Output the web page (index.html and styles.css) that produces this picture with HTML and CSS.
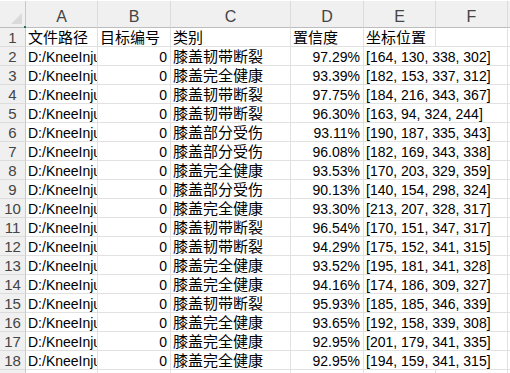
FILE: index.html
```html
<!DOCTYPE html>
<html>
<head>
<meta charset="utf-8">
<link rel="stylesheet" href="styles.css">
</head>
<body>
<div class="sheet">
  <div class="row head">
    <div class="corner"><span class="tri"></span></div>
    <div class="ch">A</div><div class="ch">B</div><div class="ch">C</div><div class="ch">D</div><div class="ch">E</div><div class="ch">F</div><div class="ch last"></div>
  </div>
  <div class="row">
    <div class="rn">1</div><div class="c zh">文件路径</div><div class="c zh">目标编号</div><div class="c zh">类别</div><div class="c zh">置信度</div><div class="c zh">坐标位置</div><div class="c"></div><div class="c last"></div>
  </div>
  <div class="row"><div class="rn">2</div><div class="c">D:/KneeInjury</div><div class="c num">0</div><div class="c zh">膝盖韧带断裂</div><div class="c num">97.29%</div><div class="c spill">[164, 130, 338, 302]</div><div class="c"></div><div class="c last"></div></div>
  <div class="row"><div class="rn">3</div><div class="c">D:/KneeInjury</div><div class="c num">0</div><div class="c zh">膝盖完全健康</div><div class="c num">93.39%</div><div class="c spill">[182, 153, 337, 312]</div><div class="c"></div><div class="c last"></div></div>
  <div class="row"><div class="rn">4</div><div class="c">D:/KneeInjury</div><div class="c num">0</div><div class="c zh">膝盖韧带断裂</div><div class="c num">97.75%</div><div class="c spill">[184, 216, 343, 367]</div><div class="c"></div><div class="c last"></div></div>
  <div class="row"><div class="rn">5</div><div class="c">D:/KneeInjury</div><div class="c num">0</div><div class="c zh">膝盖韧带断裂</div><div class="c num">96.30%</div><div class="c spill">[163, 94, 324, 244]</div><div class="c"></div><div class="c last"></div></div>
  <div class="row"><div class="rn">6</div><div class="c">D:/KneeInjury</div><div class="c num">0</div><div class="c zh">膝盖部分受伤</div><div class="c num">93.11%</div><div class="c spill">[190, 187, 335, 343]</div><div class="c"></div><div class="c last"></div></div>
  <div class="row"><div class="rn">7</div><div class="c">D:/KneeInjury</div><div class="c num">0</div><div class="c zh">膝盖部分受伤</div><div class="c num">96.08%</div><div class="c spill">[182, 169, 343, 338]</div><div class="c"></div><div class="c last"></div></div>
  <div class="row"><div class="rn">8</div><div class="c">D:/KneeInjury</div><div class="c num">0</div><div class="c zh">膝盖完全健康</div><div class="c num">93.53%</div><div class="c spill">[170, 203, 329, 359]</div><div class="c"></div><div class="c last"></div></div>
  <div class="row"><div class="rn">9</div><div class="c">D:/KneeInjury</div><div class="c num">0</div><div class="c zh">膝盖部分受伤</div><div class="c num">90.13%</div><div class="c spill">[140, 154, 298, 324]</div><div class="c"></div><div class="c last"></div></div>
  <div class="row"><div class="rn">10</div><div class="c">D:/KneeInjury</div><div class="c num">0</div><div class="c zh">膝盖完全健康</div><div class="c num">93.30%</div><div class="c spill">[213, 207, 328, 317]</div><div class="c"></div><div class="c last"></div></div>
  <div class="row"><div class="rn">11</div><div class="c">D:/KneeInjury</div><div class="c num">0</div><div class="c zh">膝盖韧带断裂</div><div class="c num">96.54%</div><div class="c spill">[170, 151, 347, 317]</div><div class="c"></div><div class="c last"></div></div>
  <div class="row"><div class="rn">12</div><div class="c">D:/KneeInjury</div><div class="c num">0</div><div class="c zh">膝盖韧带断裂</div><div class="c num">94.29%</div><div class="c spill">[175, 152, 341, 315]</div><div class="c"></div><div class="c last"></div></div>
  <div class="row"><div class="rn">13</div><div class="c">D:/KneeInjury</div><div class="c num">0</div><div class="c zh">膝盖完全健康</div><div class="c num">93.52%</div><div class="c spill">[195, 181, 341, 328]</div><div class="c"></div><div class="c last"></div></div>
  <div class="row"><div class="rn">14</div><div class="c">D:/KneeInjury</div><div class="c num">0</div><div class="c zh">膝盖完全健康</div><div class="c num">94.16%</div><div class="c spill">[174, 186, 309, 327]</div><div class="c"></div><div class="c last"></div></div>
  <div class="row"><div class="rn">15</div><div class="c">D:/KneeInjury</div><div class="c num">0</div><div class="c zh">膝盖韧带断裂</div><div class="c num">95.93%</div><div class="c spill">[185, 185, 346, 339]</div><div class="c"></div><div class="c last"></div></div>
  <div class="row"><div class="rn">16</div><div class="c">D:/KneeInjury</div><div class="c num">0</div><div class="c zh">膝盖完全健康</div><div class="c num">93.65%</div><div class="c spill">[192, 158, 339, 308]</div><div class="c"></div><div class="c last"></div></div>
  <div class="row"><div class="rn">17</div><div class="c">D:/KneeInjury</div><div class="c num">0</div><div class="c zh">膝盖完全健康</div><div class="c num">92.95%</div><div class="c spill">[201, 179, 341, 335]</div><div class="c"></div><div class="c last"></div></div>
  <div class="row"><div class="rn">18</div><div class="c">D:/KneeInjury</div><div class="c num">0</div><div class="c zh">膝盖完全健康</div><div class="c num">92.95%</div><div class="c spill">[194, 159, 341, 315]</div><div class="c"></div><div class="c last"></div></div>
  <div class="row"><div class="rn"></div><div class="c"></div><div class="c"></div><div class="c"></div><div class="c"></div><div class="c"></div><div class="c"></div><div class="c last"></div></div>
</div>
</body>
</html>
```

FILE: styles.css
```css
* { box-sizing: border-box; }
html, body { margin: 0; padding: 0; background: #fff; overflow: hidden; }
body { width: 510px; height: 373px; font-family: "Liberation Sans", "Noto Sans CJK SC", sans-serif; font-size: 14px; color: #000; }
.sheet { padding-top: 1px; }
.row { display: grid; grid-template-columns: 26px 72px 73px 120px 73px 72px 72px 1fr; height: 19px; }
.row.head { height: 27px; background: #f0f0f0; }
.corner { position: relative; border-right: 1px solid #c8c8c8; border-bottom: 1px solid #bdbdbd; }
.tri { position: absolute; right: 3px; bottom: 3px; width: 0; height: 0; border-left: 11px solid transparent; border-bottom: 11px solid #dadada; }
.corner::after { content: ""; position: absolute; right: -1px; bottom: -1px; width: 2px; height: 2px; background: #217346; }
.ch { border-right: 1px solid #dcdcdc; border-bottom: 1px solid #bdbdbd; color: #444; font-size: 16px; display: flex; align-items: flex-end; justify-content: center; padding-bottom: 1px; }
.rn { background: #f0f0f0; border-right: 1px solid #c8c8c8; border-bottom: 1px solid #dcdcdc; color: #444; font-size: 15px; display: flex; align-items: center; justify-content: center; line-height: 1; padding-top: 1px; }
.c { border-right: 1px solid #e1e1e1; border-bottom: 1px solid #e1e1e1; white-space: nowrap; overflow: hidden; padding: 1px 2px 0; display: flex; align-items: center; line-height: 1; }
.c.zh { font-size: 15px; }
.c.num { justify-content: flex-end; padding-right: 3px; }
.c.spill { overflow: visible; border-right-color: transparent; position: relative; z-index: 1; }
.last { border-right: none; }
```
